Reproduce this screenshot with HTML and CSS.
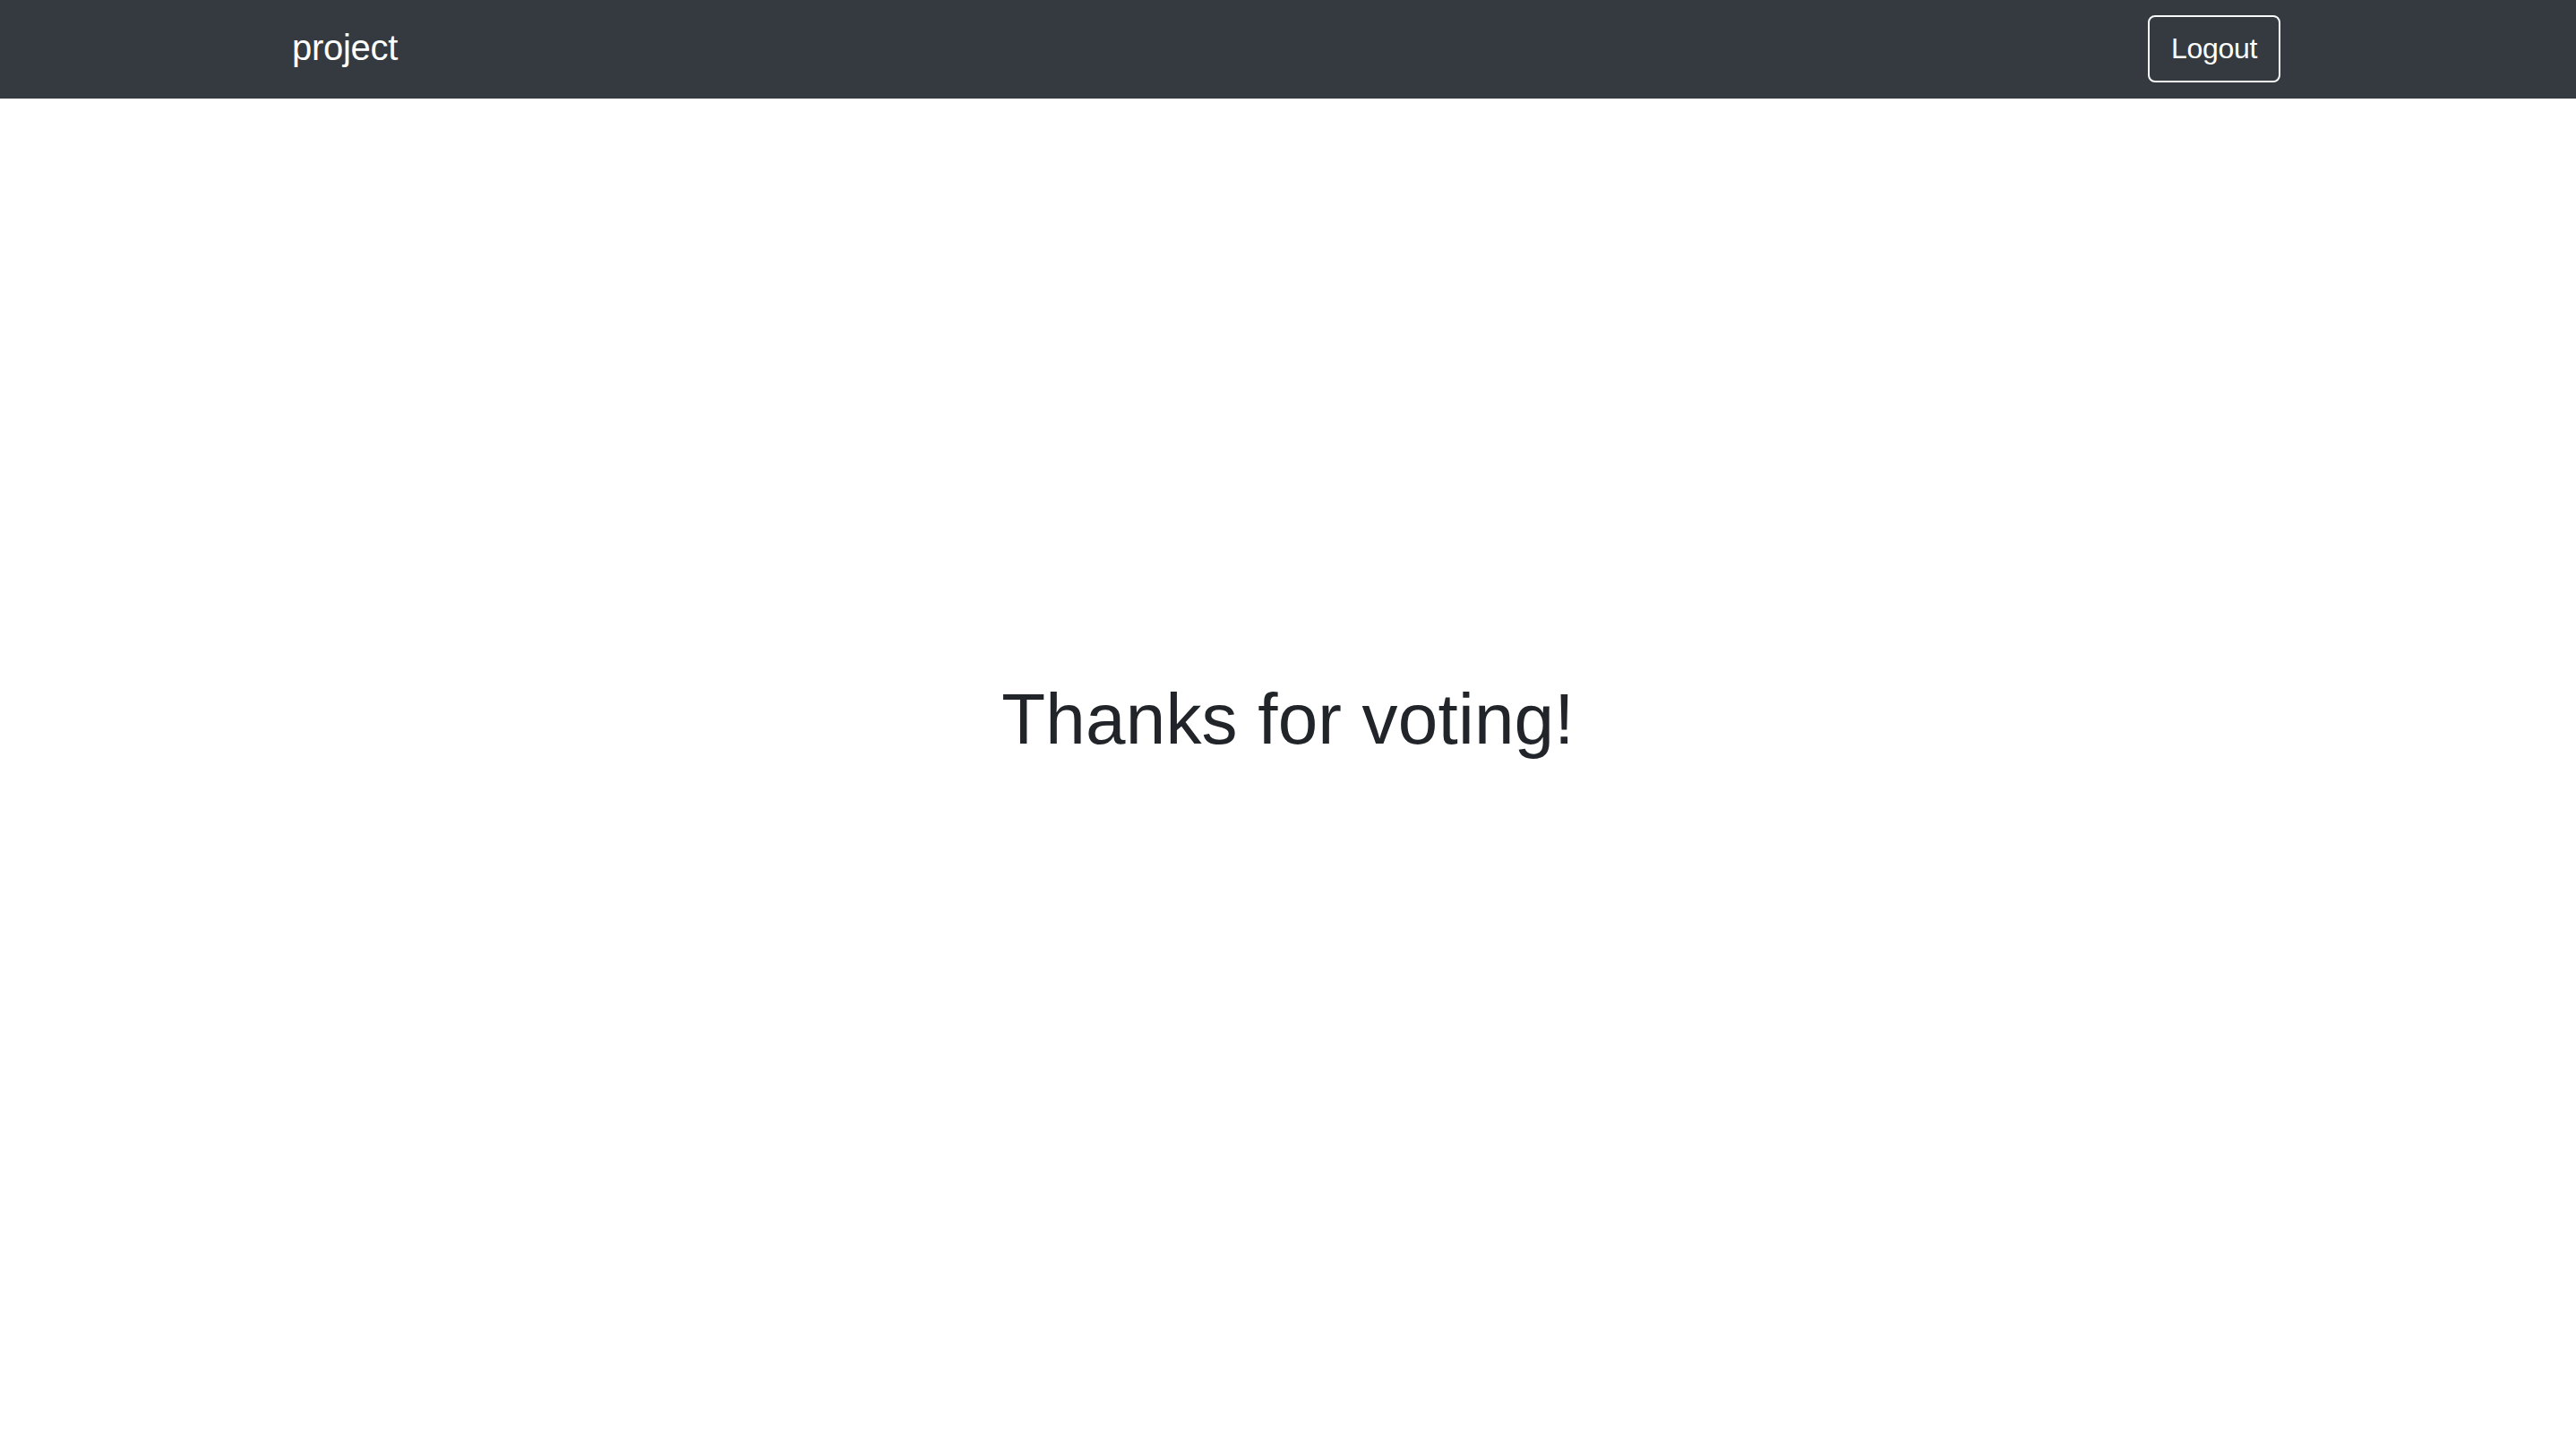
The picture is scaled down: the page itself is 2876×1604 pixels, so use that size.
FILE: index.html
```html
<!DOCTYPE html>
<html lang="en">
<head>
<meta charset="utf-8">
<title>project</title>
<link rel="stylesheet" href="styles.css">
</head>
<body>
<div class="page">
  <nav class="navbar">
    <div class="container nav-inner">
      <a class="brand" href="#">project</a>
      <button class="btn-logout" type="button">Logout</button>
    </div>
  </nav>
  <main class="main">
    <h1 class="title">Thanks for voting!</h1>
  </main>
</div>
</body>
</html>
```

FILE: styles.css
```css
html, body {
  margin: 0;
  padding: 0;
}
body {
  font-family: "Liberation Sans", Arial, Helvetica, sans-serif;
  color: #212529;
  background: #fff;
}
.page {
  min-height: 100vh;
  display: flex;
  flex-direction: column;
}
.navbar {
  background: #343a40;
  height: 110px;
  box-sizing: border-box;
  display: flex;
  align-items: center;
}
.container {
  width: 2280px;
  margin: 0 auto;
  padding: 0 30px 0 28px;
  box-sizing: border-box;
}
.nav-inner {
  display: flex;
  align-items: center;
  justify-content: space-between;
}
.brand {
  color: #fff;
  text-decoration: none;
  font-size: 40px;
  line-height: 60px;
  margin-top: -5px;
  letter-spacing: -0.3px;
}
.btn-logout {
  font-family: inherit;
  font-size: 32px;
  line-height: 47px;
  color: #fff;
  background: transparent;
  border: 2px solid #f8f9fa;
  border-radius: 8px;
  padding: 12px 24px;
  margin-right: 2px;
  margin-top: -2px;
  letter-spacing: -0.3px;
}
.main {
  flex: 1;
  display: flex;
  align-items: center;
  justify-content: center;
  padding-bottom: 108px;
}
.title {
  margin: 0;
  font-size: 80px;
  font-weight: 400;
  line-height: 96px;
  letter-spacing: 0.2px;
}
```
